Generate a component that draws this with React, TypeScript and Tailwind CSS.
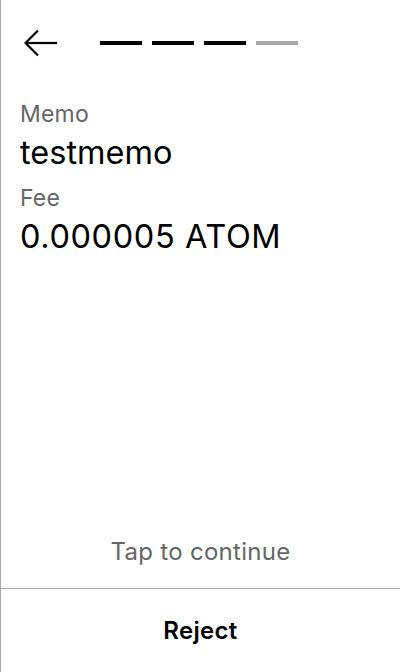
export default function App() {
  return (
    <div
      className="h-[672px] w-[400px] bg-white text-black flex flex-col border-l border-[#aaaaaa]"
      style={{ fontFamily: "Inter, 'Noto Sans', sans-serif" }}
    >
      <div className="flex items-center h-[86px] pl-[23px]">
        <svg width="34" height="28" viewBox="0 0 34 28" fill="none" stroke="black" strokeWidth="2.2">
          <path d="M33 14H1.5" />
          <path d="M14 1.5L1.5 14L14 26.5" />
        </svg>
        <div className="flex gap-[10px] ml-[42px]">
          <div className="w-[42px] h-[4px] bg-black" />
          <div className="w-[42px] h-[4px] bg-black" />
          <div className="w-[42px] h-[4px] bg-black" />
          <div className="w-[42px] h-[4px] bg-[#aaaaaa]" />
        </div>
      </div>
      <div className="px-[19px] pt-[14px] flex-1">
        <div className="text-[23px] text-[#666666] leading-[28px] tracking-[0.2px]">Memo</div>
        <div className="text-[32.5px] leading-[36px] mt-[7px]">testmemo</div>
        <div className="text-[23px] text-[#666666] leading-[28px] mt-[13px] tracking-[0.2px]">Fee</div>
        <div className="text-[32.5px] leading-[36px] mt-[7px] tracking-[0.6px]">0.000005 ATOM</div>
      </div>
      <div className="text-center text-[24px] text-[#666666] leading-[28px] pb-[22px] tracking-[0.3px]">Tap to continue</div>
      <div className="border-t border-[#aaaaaa] h-[84px] flex items-center justify-center">
        <span className="text-[24px] font-semibold tracking-[0.3px]">Reject</span>
      </div>
    </div>
  );
}
